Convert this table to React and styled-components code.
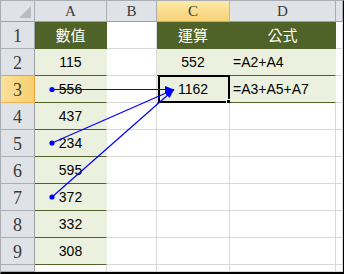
import React from 'react'
import styled, { createGlobalStyle, css } from 'styled-components'

const GlobalStyle = createGlobalStyle`
  body {
    margin: 0;
    background: #ffffff;
  }
`

const OLIVE = '#4f6228'
const PALE = '#ebf1de'
const GRID = '#d9d9d9'
const HEAD_LINE = '#a9aeb5'

const columns = ['A', 'B', 'C', 'D', '']

// one entry per row: [A, B, C, D]
const rows = [
  ['數值', '', '運算', '公式'],
  ['115', '', '552', '=A2+A4'],
  ['556', '', '1162', '=A3+A5+A7'],
  ['437', '', '', ''],
  ['234', '', '', ''],
  ['595', '', '', ''],
  ['372', '', '', ''],
  ['332', '', '', ''],
  ['308', '', '', ''],
]

// which cells carry the olive title fill or the pale data fill
const kindOf = (r, c) => {
  if (r === 0 && c !== 1) return 'title'
  if (c === 0) return 'data'
  if ((c === 2 || c === 3) && (r === 1 || r === 2)) return 'data'
  return 'plain'
}

const Frame = styled.div`
  position: relative;
  width: 344px;
  height: 274px;
  box-sizing: border-box;
  border-top: 1px solid ${HEAD_LINE};
  border-left: 1px solid ${HEAD_LINE};
  border-right: 1px solid #000;
  border-bottom: 2px solid #000;
  overflow: hidden;
  background: #fff;
`

const Sheet = styled.div`
  display: grid;
  grid-template-columns: 34px 72px 50px 73px 106px 1fr;
  grid-template-rows: 21px repeat(9, 27px) 1fr;
  height: 100%;
`

const headBase = css`
  box-sizing: border-box;
  display: flex;
  justify-content: center;
  font-family: 'Liberation Serif', serif;
  color: #3a3a3a;
  border-right: 1px solid ${HEAD_LINE};
  border-bottom: 1px solid ${HEAD_LINE};
`

const Corner = styled.div`
  ${headBase};
  position: relative;
  background: #dfe3e8;
  border-bottom-color: #9ca1a8;

  &::after {
    content: '';
    position: absolute;
    right: 3px;
    bottom: 3px;
    border-style: solid;
    border-width: 0 0 12px 12px;
    border-color: transparent transparent #b8bdc3 transparent;
  }
`

const ColHead = styled.div`
  ${headBase};
  align-items: flex-end;
  padding-bottom: 1px;
  font-size: 15px;
  background: ${(p) => (p.$active ? 'linear-gradient(#fde9a9, #f8d275)' : '#dfe3e8')};
  border-bottom-color: ${(p) => (p.$active ? '#f2a23c' : '#9ca1a8')};
  border-right-color: ${(p) => (p.$active ? '#f2b24e' : HEAD_LINE)};
`

const RowHead = styled.div`
  ${headBase};
  align-items: flex-end;
  padding-bottom: 2px;
  font-size: 18px;
  line-height: 20px;
  background: ${(p) => (p.$active ? 'linear-gradient(90deg, #fbe19a, #f7d06f)' : '#dfe3e8')};
  border-right-color: ${(p) => (p.$active ? '#f2a23c' : '#9ca1a8')};
  border-bottom-color: ${(p) => (p.$active ? '#f2b24e' : HEAD_LINE)};
`

const fills = {
  title: css`
    background: ${OLIVE};
    color: #fff;
    border-right: 1px solid ${OLIVE};
    border-bottom: 1px solid ${OLIVE};
    font-family: 'Noto Sans CJK TC', 'Noto Sans', sans-serif;
    font-size: 15px;
  `,
  data: css`
    background: ${PALE};
    color: #000;
    border-right: 1px solid ${PALE};
    border-bottom: 1px solid ${OLIVE};
  `,
  plain: css`
    background: #fff;
    border-right: 1px solid ${GRID};
    border-bottom: 1px solid ${GRID};
  `,
}

const Cell = styled.div`
  position: relative;
  box-sizing: border-box;
  display: flex;
  align-items: flex-end;
  justify-content: ${(p) => (p.$left ? 'flex-start' : 'center')};
  padding: 0 ${(p) => (p.$left ? '3px' : '0')} 5px;
  font-family: 'Liberation Sans', Arial, sans-serif;
  font-size: 14px;
  line-height: 16px;
  white-space: nowrap;
  ${(p) => fills[p.$kind]};
`

// thick frame round the active cell, with its fill handle
const Selection = styled.div`
  position: absolute;
  top: -1px;
  left: 1px;
  right: -1px;
  bottom: -1px;
  border: 2px solid #000;
  pointer-events: none;
`

const Handle = styled.div`
  position: absolute;
  right: -5px;
  bottom: -5px;
  width: 7px;
  height: 7px;
  box-sizing: border-box;
  background: #000;
  border: 1px solid #fff;
`

const Arrows = styled.svg`
  position: absolute;
  top: -1px;
  left: -1px;
  pointer-events: none;
`

const traces = [
  [52, 89.5],
  [52, 143],
  [52, 197],
]
const target = [174, 89.5]

const TraceArrows = () => (
  <Arrows width="344" height="274" viewBox="0 0 344 274">
    <defs>
      <marker id="tip" markerWidth="9" markerHeight="7" refX="9" refY="3.5" orient="auto" markerUnits="userSpaceOnUse">
        <path d="M0,0 L9,3.5 L0,7 z" fill="#0000ff" />
      </marker>
    </defs>
    {traces.map(([x, y], i) => (
      <g key={i}>
        <line x1={x} y1={y} x2={target[0]} y2={target[1]} stroke="#0000ff" strokeWidth="1.2" markerEnd="url(#tip)" />
        <circle cx={x} cy={y} r="2.6" fill="#0000ff" />
      </g>
    ))}
  </Arrows>
)

const App = () => {
  return (
    <>
      <GlobalStyle />
      <Frame>
        <Sheet>
          <Corner />
          {columns.map((c, i) => (
            <ColHead key={i} $active={c === 'C'}>{c}</ColHead>
          ))}

          {rows.map((row, r) => (
            <React.Fragment key={r}>
              <RowHead $active={r === 2}>{r + 1}</RowHead>
              {row.map((value, c) => (
                <Cell key={c} $kind={kindOf(r, c)} $left={r > 0 && c === 3}>
                  {value}
                  {r === 2 && c === 2 && (
                    <Selection>
                      <Handle />
                    </Selection>
                  )}
                </Cell>
              ))}
              <Cell $kind="plain" />
            </React.Fragment>
          ))}

          <RowHead />
          {columns.map((c, i) => (
            <Cell key={i} $kind="plain" />
          ))}
        </Sheet>
        <TraceArrows />
      </Frame>
    </>
  )
}

export default App
